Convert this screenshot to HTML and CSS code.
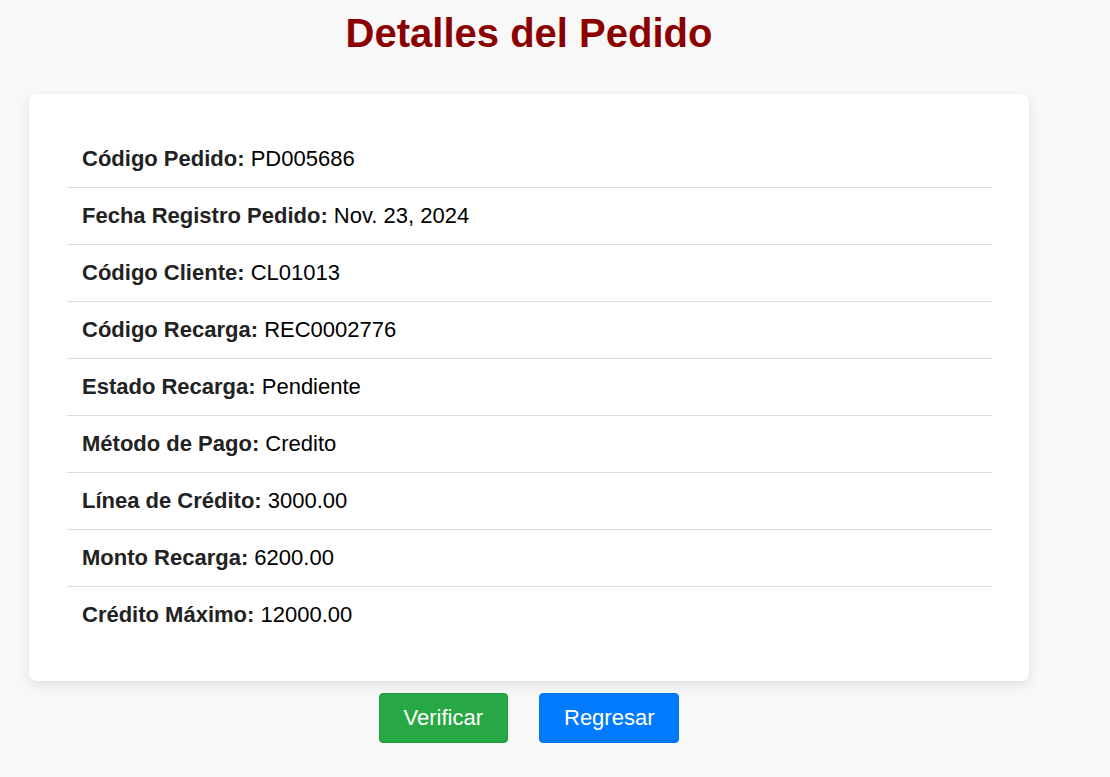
FILE: index.html
```html
<!DOCTYPE html>
<html lang="es">
<head>
<meta charset="utf-8">
<title>Detalles del Pedido</title>
<link rel="stylesheet" href="styles.css">
</head>
<body>
<div class="page">
  <h1 class="title">Detalles del Pedido</h1>
  <div class="card">
    <ul class="details">
      <li class="row"><span class="label">Código Pedido:</span> PD005686</li>
      <li class="row"><span class="label">Fecha Registro Pedido:</span> Nov. 23, 2024</li>
      <li class="row"><span class="label">Código Cliente:</span> CL01013</li>
      <li class="row"><span class="label">Código Recarga:</span> REC0002776</li>
      <li class="row"><span class="label">Estado Recarga:</span> Pendiente</li>
      <li class="row"><span class="label">Método de Pago:</span> Credito</li>
      <li class="row"><span class="label">Línea de Crédito:</span> 3000.00</li>
      <li class="row"><span class="label">Monto Recarga:</span> 6200.00</li>
      <li class="row"><span class="label">Crédito Máximo:</span> 12000.00</li>
    </ul>
  </div>
  <div class="actions">
    <button class="btn btn-green" type="button">Verificar</button>
    <button class="btn btn-blue" type="button">Regresar</button>
  </div>
</div>
</body>
</html>
```
FILE: styles.css
```css
html, body {
  margin: 0;
  padding: 0;
}
body {
  background: #f8f8f8;
  font-family: "Liberation Sans", Arial, sans-serif;
}
.page {
  width: 1000px;
  margin-left: 29px;
  padding-top: 10px;
}
.title {
  margin: 0 0 38px;
  text-align: center;
  font-size: 40px;
  line-height: 46px;
  font-weight: bold;
  color: #8b0000;
}
.card {
  background: #fff;
  border-radius: 8px;
  box-shadow: 0 4px 12px rgba(0, 0, 0, 0.1);
  padding: 37px 37px 38px 38px;
}
.details {
  list-style: none;
  margin: 0;
  padding: 0;
}
.row {
  font-size: 22px;
  line-height: 26px;
  padding: 15px 15px;
  color: #000;
  border-bottom: 1px solid #ddd;
}
.row:last-child {
  border-bottom: none;
}
.label {
  font-weight: bold;
  color: #222;
}
.actions {
  display: flex;
  justify-content: center;
  gap: 31px;
  margin-top: 12px;
}
.btn {
  font-family: "Liberation Sans", Arial, sans-serif;
  font-size: 22px;
  line-height: 24px;
  padding: 12px 24px;
  color: #fff;
  border-radius: 4px;
  cursor: pointer;
}
.btn-green {
  background: #28a745;
  border: 1px solid #1f9a3c;
}
.btn-blue {
  background: #007bff;
  border: 1px solid #0073f0;
}
```
